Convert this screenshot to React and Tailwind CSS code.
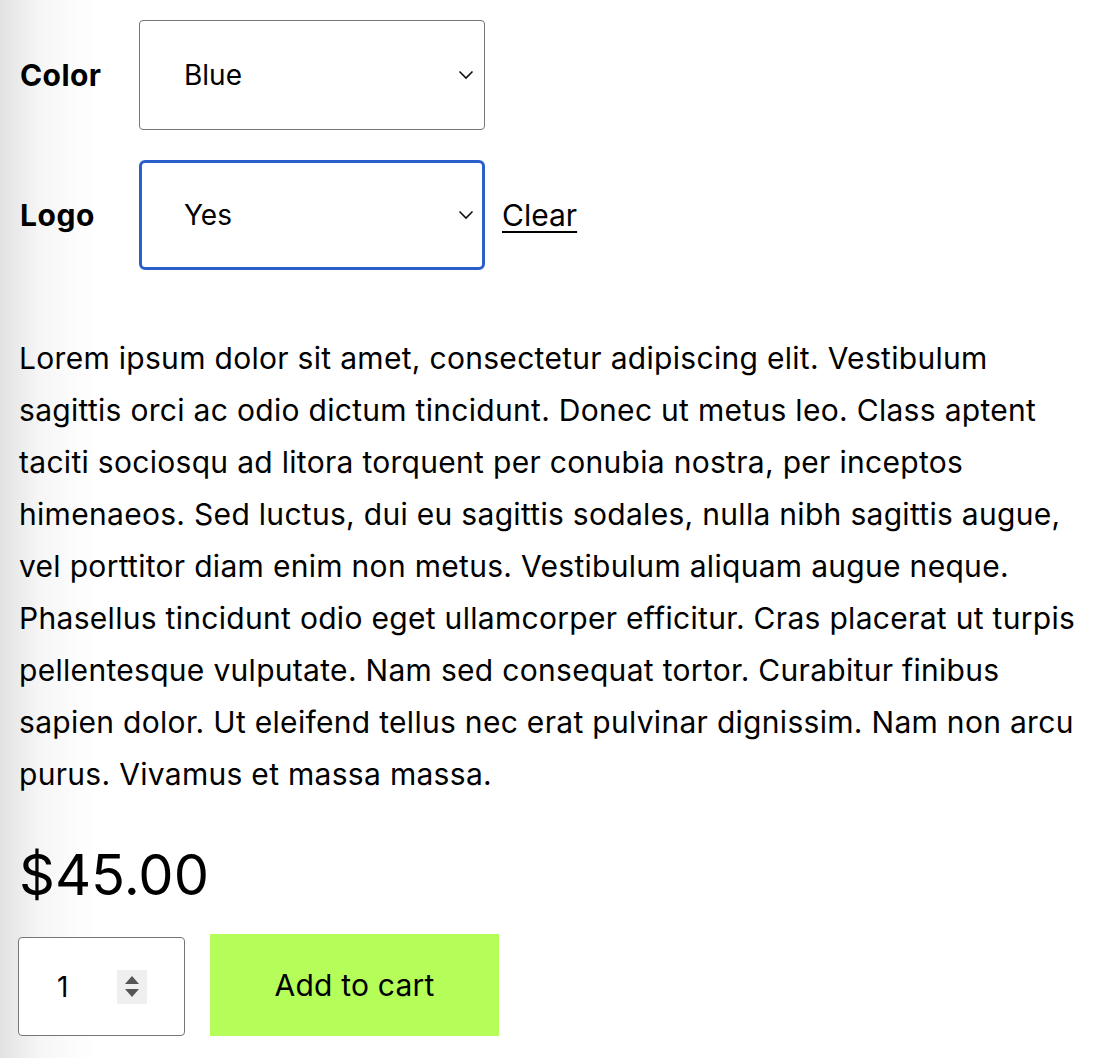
export default function App() {
  return (
    <div className="min-h-screen w-[1102px] h-[1058px] overflow-hidden bg-[linear-gradient(90deg,#e2e2e2_0px,#f6f6f6_40px,#ffffff_95px)] text-black font-['Inter','Liberation_Sans',sans-serif]">
      <div className="pl-[19px] pt-[20px] pr-[10px]">
        <div className="flex flex-col gap-[30px]">
          <div className="flex items-center">
            <div className="w-[120px] pl-px text-[30px] font-bold tracking-[0.4px]">Color</div>
            <div className="relative flex h-[110px] w-[346px] items-center rounded-[4px] border border-[#767676] bg-white pl-[44px] text-[28px]">
              Blue
              <svg className="absolute right-[10px] top-1/2 -translate-y-1/2" width="16" height="10" viewBox="0 0 16 10" fill="none">
                <path d="M1.5 1.5 L8 8 L14.5 1.5" stroke="#111" strokeWidth="1.6" />
              </svg>
            </div>
          </div>
          <div className="flex items-center">
            <div className="w-[120px] pl-px text-[30px] font-bold tracking-[0.6px]">Logo</div>
            <div className="relative flex h-[110px] w-[346px] items-center rounded-[6px] border-[3px] border-[#2a5ec9] bg-white pl-[42px] text-[28px]">
              Yes
              <svg className="absolute right-[8px] top-1/2 -translate-y-1/2" width="16" height="10" viewBox="0 0 16 10" fill="none">
                <path d="M1.5 1.5 L8 8 L14.5 1.5" stroke="#111" strokeWidth="1.6" />
              </svg>
            </div>
            <a href="#" className="ml-[17px] text-[30px] underline decoration-2 underline-offset-[5px]">Clear</a>
          </div>
        </div>

        <p className="mt-[62px] text-[30px] leading-[52px] tracking-[0.3px]">
          Lorem ipsum dolor sit amet, consectetur adipiscing elit. Vestibulum sagittis orci ac odio dictum tincidunt. Donec ut metus leo. Class aptent taciti sociosqu ad litora torquent per conubia nostra, per inceptos himenaeos. Sed luctus, dui eu sagittis sodales, nulla nibh sagittis augue, vel porttitor diam enim non metus. Vestibulum aliquam augue neque. Phasellus tincidunt odio eget ullamcorper efficitur. Cras placerat ut turpis pellentesque vulputate. Nam sed consequat tortor. Curabitur finibus sapien dolor. Ut eleifend tellus nec erat pulvinar dignissim. Nam non arcu purus. Vivamus et massa massa.
        </p>

        <div className="mt-[40px] text-[56px] leading-[70px]">$45.00</div>

        <div className="-ml-px mt-[24px] flex items-end gap-[25px]">
          <div className="flex h-[99px] w-[167px] items-center rounded-[4px] border border-[#767676] bg-white pl-[38px] text-[28px]">
            <span className="w-[60px]">1</span>
            <div className="flex h-[34px] w-[30px] flex-col items-center justify-center gap-[5px] bg-[#efefef]">
              <svg width="14" height="8" viewBox="0 0 14 8"><path d="M7 0 L14 8 L0 8 Z" fill="#555" /></svg>
              <svg width="14" height="8" viewBox="0 0 14 8"><path d="M0 0 L14 0 L7 8 Z" fill="#555" /></svg>
            </div>
          </div>
          <button className="h-[102px] w-[289px] bg-[#b5fd58] text-[30px] tracking-[0.2px]">Add to cart</button>
        </div>
      </div>
    </div>
  );
}
